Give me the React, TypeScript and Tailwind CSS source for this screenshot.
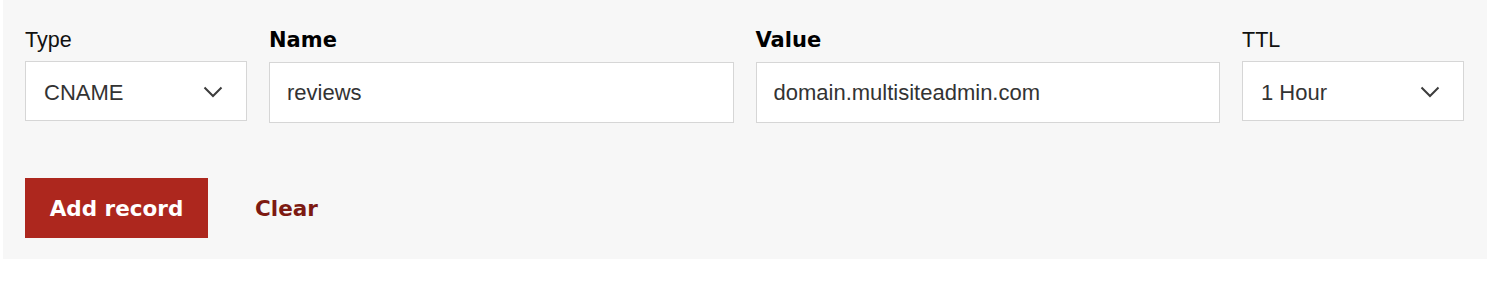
import { useState } from 'react';

function Chevron() {
  return (
    <svg width="20" height="12" viewBox="0 0 20 12" fill="none" className="shrink-0">
      <path d="M1.5 1.5L10 10L18.5 1.5" stroke="#3c3c3c" strokeWidth="2" />
    </svg>
  );
}

function SelectBox({ value }: { value: string }) {
  return (
    <div className="flex h-[60px] items-center justify-between border border-[#d6d6d6] bg-white pl-[18px] pr-[23px] pt-[2px] text-[22px] text-[#333]">
      <span>{value}</span>
      <Chevron />
    </div>
  );
}

function TextBox({ value, onChange }: { value: string; onChange: (v: string) => void }) {
  return (
    <input
      value={value}
      onChange={(e) => onChange(e.target.value)}
      className="mt-[1px] h-[61px] w-full border border-[#d6d6d6] bg-white px-[17px] text-[22px] text-[#333] outline-none"
    />
  );
}

export default function App() {
  const [name, setName] = useState('reviews');
  const [value, setValue] = useState('domain.multisiteadmin.com');

  return (
    <div className="h-[283px] bg-white font-['Liberation_Sans',Arial,sans-serif]">
      <div className="ml-[3px] h-[259px] bg-[#f7f7f7] pl-[22px] pr-[23px] pt-[28px]">
        <div className="grid grid-cols-[222px_1fr_1fr_222px] gap-x-[22px]">
          <div>
            <div className="mb-[9px] h-[24px] text-[21.5px] leading-[24px] text-[#111]">Type</div>
            <SelectBox value="CNAME" />
          </div>
          <div>
            <div className="mb-[9px] h-[24px] font-['DejaVu_Sans',sans-serif] text-[21px] font-bold leading-[24px] text-black">
              Name
            </div>
            <TextBox value={name} onChange={setName} />
          </div>
          <div>
            <div className="mb-[9px] h-[24px] font-['DejaVu_Sans',sans-serif] text-[21px] font-bold leading-[24px] text-black">
              Value
            </div>
            <TextBox value={value} onChange={setValue} />
          </div>
          <div>
            <div className="mb-[9px] h-[24px] text-[21.5px] leading-[24px] text-[#111]">TTL</div>
            <SelectBox value="1 Hour" />
          </div>
        </div>

        <div className="mt-[55px] flex items-center">
          <button className="h-[60px] w-[183px] bg-[#ad271e] pt-[3px] font-['DejaVu_Sans',sans-serif] text-[21.5px] font-bold text-white">
            Add record
          </button>
          <button className="ml-[47px] pt-[3px] font-['DejaVu_Sans',sans-serif] text-[21.5px] font-bold text-[#7d1a12]">
            Clear
          </button>
        </div>
      </div>
    </div>
  );
}
